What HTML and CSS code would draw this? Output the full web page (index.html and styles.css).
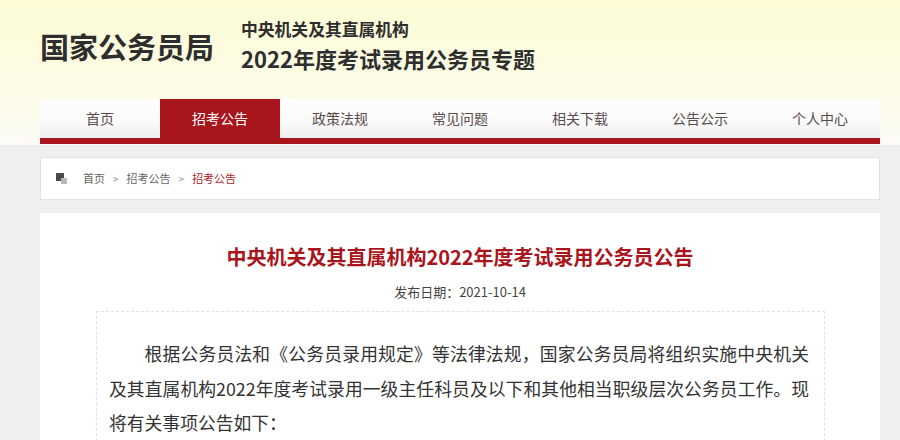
FILE: index.html
```html
<!DOCTYPE html>
<html lang="zh-CN">
<head>
<meta charset="utf-8">
<link rel="stylesheet" href="styles.css">
</head>
<body>
<div class="header">
  <div class="top">
    <div class="logo">国家公务员局</div>
    <div class="subject">
      <div class="sub1">中央机关及其直属机构</div>
      <div class="sub2">2022年度考试录用公务员专题</div>
    </div>
  </div>
  <div class="nav">
    <div class="tabs">
      <a class="tab">首页</a>
      <a class="tab active">招考公告</a>
      <a class="tab">政策法规</a>
      <a class="tab">常见问题</a>
      <a class="tab">相关下载</a>
      <a class="tab">公告公示</a>
      <a class="tab">个人中心</a>
    </div>
    <div class="navbar-line"></div>
  </div>
</div>
<div class="page">
  <div class="crumb">
    <span class="crumb-icon"><span class="sq1"></span><span class="sq2"></span></span>
    <span class="crumb-item">首页</span>
    <span class="sep">&gt;</span>
    <span class="crumb-item">招考公告</span>
    <span class="sep">&gt;</span>
    <span class="crumb-item current">招考公告</span>
  </div>
  <div class="article">
    <h1 class="title">中央机关及其直属机构2022年度考试录用公务员公告</h1>
    <div class="date">发布日期：2021-10-14</div>
    <div class="content">
      <p class="para">根据公务员法和《公务员录用规定》等法律法规，国家公务员局将组织实施中央机关及其直属机构2022年度考试录用一级主任科员及以下和其他相当职级层次公务员工作。现将有关事项公告如下：</p>
    </div>
  </div>
</div>
</body>
</html>
```

FILE: styles.css
```css
* { box-sizing: border-box; }
html, body {
  margin: 0;
  padding: 0;
}
body {
  background: #f0efef;
  font-family: "Noto Sans CJK SC", "Noto Sans", sans-serif;
  color: #333;
  width: 900px;
  height: 440px;
  overflow: hidden;
}
.header {
  height: 145px;
  background: linear-gradient(to bottom, #fbfbd4 0%, #fdfce6 55%, #fcfbf5 100%);
}
.top {
  height: 99px;
  padding: 0 0 9px 40px;
  display: flex;
  align-items: center;
}
.logo {
  font-size: 29px;
  font-weight: 700;
  color: #2e2e2e;
  line-height: 1;
  margin-right: 27px;
  margin-top: 2px;
}
.subject {
  display: flex;
  flex-direction: column;
  color: #2e2e2e;
  font-weight: 700;
}
.sub1 {
  font-size: 16.8px;
  line-height: 22px;
}
.sub2 {
  font-size: 22px;
  line-height: 30px;
  margin-top: 3px;
}
.nav {
  margin: 0 20px 0 40px;
  width: 840px;
}
.tabs {
  display: flex;
  height: 39px;
  background: linear-gradient(to bottom, #ffffff 0%, #f9f9f9 60%, #efefef 100%);
}
.tab {
  width: 120px;
  display: flex;
  align-items: center;
  justify-content: center;
  font-size: 14px;
  color: #5a4c4c;
  padding-bottom: 2px;
}
.tab.active {
  background: #a8151c;
  color: #ffffff;
}
.navbar-line {
  height: 6px;
  background: #a8151c;
}
.page {
  padding: 12px 20px 0 40px;
}
.crumb {
  height: 43px;
  background: #ffffff;
  border: 1px solid #e2e2e2;
  display: flex;
  align-items: center;
  padding-left: 15px;
  font-size: 11px;
  color: #666;
}
.crumb-icon {
  position: relative;
  width: 12px;
  height: 12px;
  margin-right: 15px;
  margin-top: 1px;
}
.sq1 {
  position: absolute;
  left: 0;
  top: 0;
  width: 8px;
  height: 8px;
  background: #4a4a4a;
}
.sq2 {
  position: absolute;
  left: 5px;
  top: 5px;
  width: 6px;
  height: 6px;
  background: #b8b8b8;
}
.crumb-item { line-height: 1; }
.crumb-item.current { color: #b0262b; }
.sep {
  margin: 0 8px;
  color: #888;
  font-size: 10px;
}
.article {
  margin-top: 13px;
  background: #ffffff;
  height: 227px;
  padding-top: 29px;
}
.title {
  margin: 0;
  text-align: center;
  font-size: 20px;
  line-height: 30px;
  font-weight: 700;
  color: #a8151c;
}
.date {
  margin-top: 10px;
  text-align: center;
  font-size: 13px;
  line-height: 20px;
  color: #444;
}
.content {
  margin: 9px 55px 0 56px;
  border: 1px dashed #e2e2e2;
  border-bottom: none;
  height: 130px;
  padding: 24px 16px 0 12px;
}
.para {
  margin: 0;
  font-size: 17.8px;
  line-height: 34.5px;
  text-indent: 2em;
  text-align: justify;
  color: #333;
  width: 700px;
}
```
